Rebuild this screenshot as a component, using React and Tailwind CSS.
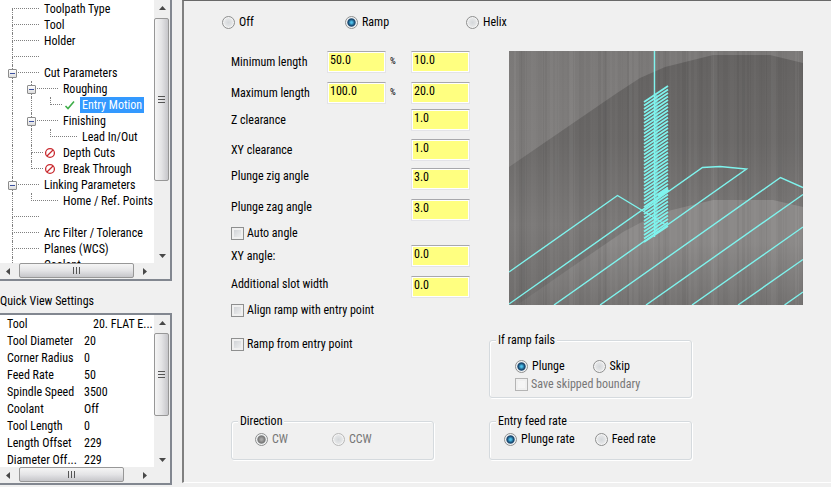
import React from 'react';

const treeRows = [
  { label: 'Toolpath Type', depth: 0, first: true },
  { label: 'Tool', depth: 0 },
  { label: 'Holder', depth: 0 },
  { label: '', depth: 0 },
  { label: 'Cut Parameters', depth: 0, open: true },
  { label: 'Roughing', depth: 1, open: true },
  { label: 'Entry Motion', depth: 2, last: true, icon: 'check', selected: true },
  { label: 'Finishing', depth: 1, open: true },
  { label: 'Lead In/Out', depth: 2, last: true },
  { label: 'Depth Cuts', depth: 1, icon: 'off' },
  { label: 'Break Through', depth: 1, last: true, icon: 'off' },
  { label: 'Linking Parameters', depth: 0, open: true },
  { label: 'Home / Ref. Points', depth: 1, last: true },
  { label: '', depth: 0 },
  { label: 'Arc Filter / Tolerance', depth: 0 },
  { label: 'Planes (WCS)', depth: 0 },
  { label: 'Coolant', depth: 0 },
];

const quickView = [
  ['Tool', '20. FLAT E...'],
  ['Tool Diameter', '20'],
  ['Corner Radius', '0'],
  ['Feed Rate', '50'],
  ['Spindle Speed', '3500'],
  ['Coolant', 'Off'],
  ['Tool Length', '0'],
  ['Length Offset', '229'],
  ['Diameter Off...', '229'],
];

const arrowPaths = {
  up: 'M0 5 L3.5 1 L7 5 Z',
  down: 'M0 2 L3.5 6 L7 2 Z',
  left: 'M5 0 L1 3.5 L5 7 Z',
  right: 'M2 0 L6 3.5 L2 7 Z',
};

function ArrowButton({ dir }) {
  return (
    <button type="button" aria-label={`Scroll ${dir}`} className="flex h-4 w-4 shrink-0 items-center justify-center">
      <svg width="7" height="7" viewBox="0 0 7 7" aria-hidden="true">
        <path d={arrowPaths[dir]} fill="#484848" />
      </svg>
    </button>
  );
}

function VerticalScrollbar({ thumbClass }) {
  return (
    <div className="flex w-4 shrink-0 flex-col bg-[#efefef]">
      <ArrowButton dir="up" />
      <div className="min-h-0 flex-1 pt-0.5">
        <div className={`flex w-[15px] flex-col items-center justify-center gap-0.5 rounded-xs border border-[#979797] bg-linear-to-r from-[#f5f5f5] via-[#e4e4e6] to-[#c6c6ca] ${thumbClass}`}>
          <span className="h-px w-[7px] bg-[#555]" />
          <span className="h-px w-[7px] bg-[#555]" />
          <span className="h-px w-[7px] bg-[#555]" />
        </div>
      </div>
      <ArrowButton dir="down" />
    </div>
  );
}

function HorizontalScrollbar({ thumbClass }) {
  return (
    <div className="flex h-4 shrink-0 bg-[#efefef] pr-[18px]">
      <ArrowButton dir="left" />
      <div className="min-w-0 flex-1 pl-[3px]">
        <div className={`flex h-[15px] items-center justify-center gap-0.5 rounded-xs border border-[#979797] bg-linear-to-b from-[#f5f5f5] via-[#e4e4e6] to-[#c6c6ca] ${thumbClass}`}>
          <span className="h-[7px] w-px bg-[#555]" />
          <span className="h-[7px] w-px bg-[#555]" />
          <span className="h-[7px] w-px bg-[#555]" />
        </div>
      </div>
      <ArrowButton dir="right" />
    </div>
  );
}

function StatusIcon({ type }) {
  if (type === 'check') {
    return (
      <svg width="12" height="12" viewBox="0 0 12 12" fill="none" aria-hidden="true" className="mr-1 ml-0.5 shrink-0">
        <path d="M1.5 7 L4 9.5 L10 2.5" stroke="#3fae49" strokeWidth="1.6" />
      </svg>
    );
  }
  return (
    <svg width="12" height="12" viewBox="0 0 12 12" fill="none" aria-hidden="true" className="mr-[7px] ml-px shrink-0">
      <circle cx="6" cy="6" r="4.4" stroke="#c8282d" strokeWidth="1.3" />
      <path d="M3 9 L9 3" stroke="#c8282d" strokeWidth="1.2" />
    </svg>
  );
}

function TreeRow({ row }) {
  return (
    <li className="flex h-4 items-center pl-3">
      {/* Guide lines of the parent levels */}
      {Array.from({ length: row.depth }, (_, i) => (
        <span key={i} className="h-full w-[19px] shrink-0 border-l border-dotted border-[#808080]" />
      ))}
      <span className={`relative flex h-full shrink-0 flex-col ${row.icon ? 'w-3' : 'w-[27px]'}`}>
        <span className={`h-1/2 w-full border-b border-dotted border-[#808080] ${row.first ? '' : 'border-l'}`} />
        <span className={`h-1/2 border-dotted border-[#808080] ${row.last ? '' : 'border-l'}`} />
        {row.open && (
          <button
            type="button"
            aria-label={`Collapse ${row.label}`}
            className="absolute top-1 -left-1 flex h-[9px] w-[9px] items-center justify-center rounded-[1px] border border-[#8c8c8c] bg-linear-to-b from-white to-[#dcdcdc]"
          >
            <span className="h-px w-[5px] bg-[#3c50a0]" />
          </button>
        )}
      </span>
      {row.icon && <StatusIcon type={row.icon} />}
      <span
        className={`leading-4 whitespace-nowrap ${row.icon ? '' : 'ml-[5px]'} ${
          row.selected ? 'bg-[#3399ff] px-0.5 text-white' : ''
        }`}
      >
        {row.label}
      </span>
    </li>
  );
}

function Radio({ label, name, ...rest }) {
  return (
    <label className="flex items-center gap-1 leading-4 whitespace-nowrap has-disabled:text-[#777]">
      <input
        type="radio"
        name={name}
        className="h-[13px] w-[13px] shrink-0 appearance-none rounded-full border border-[#8e8f8f] bg-radial from-[#d4d7da] to-[#f4f4f4] shadow-[inset_0_0_0_1px_#f4f4f4] checked:bg-radial checked:from-[#4fc3ee] checked:from-10% checked:via-[#123f66] checked:via-45% checked:to-[#e8f0f4] checked:to-65% disabled:border-[#b8b8b8] disabled:checked:border-[#8e8f8f] disabled:checked:from-[#a8a8a8] disabled:checked:via-[#777]"
        {...rest}
      />
      {label}
    </label>
  );
}

function CheckBox({ label, className, ...rest }) {
  return (
    <label className={`flex h-4 items-center gap-[3px] whitespace-nowrap has-disabled:text-[#777] ${className}`}>
      <input
        type="checkbox"
        className="h-[13px] w-[13px] shrink-0 appearance-none border border-[#8e8f8f] bg-linear-to-br from-[#c9ccd0] to-[#f6f6f6] shadow-[inset_0_0_0_2px_#f0f0f0] checked:bg-[#4b6f9c] disabled:border-[#b4b4b4] disabled:from-[#f4f4f4]"
        {...rest}
      />
      {label}
    </label>
  );
}

function NumberBox(props) {
  return (
    <input
      type="text"
      className="h-[22px] w-[59px] shrink-0 border border-[#e3e3e8] border-t-[#a8a8ac] bg-[#ffff80] px-0.5 pb-1 shadow-[inset_0_0_0_1px_#fff] outline-none"
      {...props}
    />
  );
}

function Field({ id, label, value, percent, className = '', raised }) {
  return (
    <div className={`flex h-[22px] items-center ${className}`}>
      <label htmlFor={id} className={`flex-1 leading-4 whitespace-nowrap ${raised ? 'self-start' : ''}`}>
        {label}
      </label>
      {percent && (
        <>
          <NumberBox aria-label={`${label} percent`} defaultValue={percent} />
          <span className="w-[25px] pl-1 text-[9px]">%</span>
        </>
      )}
      <NumberBox id={id} defaultValue={value} />
    </div>
  );
}

function Group({ title, className = '', children }) {
  return (
    <fieldset className={`w-[203px] rounded-[3px] border border-[#d5dade] shadow-[1px_1px_0_#fff,inset_1px_1px_0_#fff] ${className}`}>
      <legend className="ml-1.5 h-3 bg-[#f0f0f0] px-0.5 leading-3">{title}</legend>
      {children}
    </fieldset>
  );
}

// Vertical brushed streaks over the stock surface
const streaks = Array.from({ length: 74 }, (_, i) => ({
  x: i * 4 + ((i * 7) % 3),
  w: 1 + ((i * 5) % 4),
  light: (i * 11) % 5 < 2,
  o: 0.01 + ((i * 13) % 7) * 0.006,
}));

const rampPasses = Array.from({ length: 41 }, (_, i) => i * 3.5);

function RampPreview() {
  return (
    <svg viewBox="0 0 294 254" className="block w-full" role="img" aria-label="Ramp entry toolpath preview">
      <defs>
        <linearGradient id="top" x1="0" y1="0" x2="0" y2="1">
          <stop offset="0" stopColor="#7b7978" />
          <stop offset="1" stopColor="#878584" />
        </linearGradient>
        <linearGradient id="wall" x1="0" y1="0" x2="0" y2="1">
          <stop offset="0" stopColor="#656362" />
          <stop offset="0.35" stopColor="#6b6968" />
          <stop offset="0.68" stopColor="#7b7978" />
          <stop offset="1" stopColor="#6f6d6c" />
        </linearGradient>
        <linearGradient id="floor" x1="0" y1="0" x2="0" y2="1">
          <stop offset="0" stopColor="#8b8988" />
          <stop offset="0.4" stopColor="#8b8988" />
          <stop offset="1" stopColor="#757372" />
        </linearGradient>
      </defs>
      <rect width="294" height="254" fill="url(#top)" />
      <path d="M0 116 L108 42 L131 27 L156 16 L204 4 L261 4 L294 12 V254 H0 Z" fill="url(#wall)" />
      <path d="M8 254 L63 216 L114 181 L131 172 L159 160 L204 149 L264 149 L294 156 V254 Z" fill="url(#floor)" />
      {streaks.map((s) => (
        <rect key={s.x} x={s.x} width={s.w} height="254" fill={s.light ? '#fff' : '#000'} opacity={s.o} />
      ))}
      <g fill="none" stroke="#7ff4ee" strokeWidth="1.4">
        <path d="M145.5 0 V186" />
        <path d="M0 221 L108.5 144.5 L135 160.5 L157 174" />
        <path d="M0 253 L193.5 116.5 L211 115.5 L237.5 118 L45 254" />
        <path d="M91 254 L271.5 126.5 L294 136.5" />
        <path d="M137 254 L294 143.5" />
        <path d="M183 254 L294 176" />
        <path d="M229 254 L294 208.5" />
        <path d="M275.5 254 L294 241" />
        {rampPasses.map((y) => (
          <path key={y} d={`M135 ${51 + y} L159 ${35 + y}`} strokeWidth="1.8" />
        ))}
        <path d="M147 44 V183" strokeWidth="3" opacity="0.6" />
        <path d="M149 145 L159 138" strokeWidth="4" />
      </g>
    </svg>
  );
}

export default function App() {
  return (
    <div className="flex min-h-screen bg-[#f0f0f0] font-['Roboto_Condensed',Roboto,'Liberation_Sans',sans-serif] text-[12px] text-black">
      <aside className="flex w-[172px] shrink-0 flex-col">
        <nav aria-label="Toolpath pages" className="flex h-[281px] flex-col border-r-2 border-b-2 border-[#828790] bg-white">
          <div className="flex min-h-0 flex-1">
            <ul className="min-w-0 flex-1 overflow-hidden pt-px">
              {treeRows.map((row, i) => (
                <TreeRow key={i} row={row} />
              ))}
            </ul>
            <VerticalScrollbar thumbClass="h-[163px]" />
          </div>
          <HorizontalScrollbar thumbClass="w-[115px]" />
        </nav>

        <h2 className="mt-3 leading-4">Quick View Settings</h2>
        <section className="mt-1 flex h-[172px] flex-col border-t-2 border-r-2 border-b-2 border-[#828790] bg-white">
          <div className="flex min-h-0 flex-1">
            <div className="min-w-0 flex-1 overflow-hidden pl-[7px]">
              <table className="w-full table-fixed">
                <tbody>
                  {quickView.map(([name, value], i) => (
                    <tr key={name} className="h-[17px] leading-4">
                      <th scope="row" className="w-[77px] p-0 text-left font-normal whitespace-nowrap">{name}</th>
                      <td className={`p-0 whitespace-nowrap ${i === 0 ? 'pl-[9px]' : ''}`}>{value}</td>
                    </tr>
                  ))}
                </tbody>
              </table>
            </div>
            <VerticalScrollbar thumbClass="h-[83px]" />
          </div>
          <HorizontalScrollbar thumbClass="w-[105px]" />
        </section>
      </aside>

      <main className="mb-1 ml-2.5 min-w-0 flex-1 border-t border-b border-l-2 border-t-[#696969] border-b-white border-l-[#808080] pt-[13px] pl-[38px]">
        <div role="radiogroup" aria-label="Entry motion" className="grid grid-cols-[123px_121px_1fr]">
          <Radio name="entry" label="Off" />
          <Radio name="entry" label="Ramp" defaultChecked />
          <Radio name="entry" label="Helix" />
        </div>

        <div className="grid grid-cols-[258px_1fr] pt-[21px] pl-[9px]">
          <div className="flex flex-col">
            <div className="w-[239px]">
              <Field id="min-length" label="Minimum length" percent="50.0" value="10.0" />
              <Field id="max-length" label="Maximum length" percent="100.0" value="20.0" className="mt-[9px]" />
              <Field id="z-clearance" label="Z clearance" value="1.0" className="mt-[5px]" />
              <Field id="xy-clearance" label="XY clearance" value="1.0" className="mt-2" />
              <Field id="zig-angle" label="Plunge zig angle" value="3.0" className="mt-[7px]" raised />
              <Field id="zag-angle" label="Plunge zag angle" value="3.0" className="mt-[9px]" raised />
              <CheckBox label="Auto angle" className="mt-1" />
              <Field id="xy-angle" label="XY angle:" value="0.0" className="mt-1" />
              <Field id="slot-width" label="Additional slot width" value="0.0" className="mt-[9px]" raised />
              <CheckBox label="Align ramp with entry point" className="mt-1" />
              <CheckBox label="Ramp from entry point" className="mt-[18px]" />
            </div>
            <Group title="Direction" className="mt-auto h-[45px]">
              <div className="flex gap-11 pt-1 pl-[23px]">
                <Radio name="direction" label="CW" defaultChecked disabled />
                <Radio name="direction" label="CCW" disabled />
              </div>
            </Group>
          </div>

          <div>
            <div className="pr-7 pl-5">
              <RampPreview />
            </div>
            <Group title="If ramp fails" className="mt-[29px] h-[64px]">
              <div className="flex gap-7 pt-3 pl-[25px]">
                <Radio name="ramp-fails" label="Plunge" defaultChecked />
                <Radio name="ramp-fails" label="Skip" />
              </div>
              <CheckBox label="Save skipped boundary" className="mt-0.5 ml-[25px]" disabled />
            </Group>
            <Group title="Entry feed rate" className="mt-[17px] h-[45px]">
              <div className="flex gap-5 pt-1 pl-3.5">
                <Radio name="feed-rate" label="Plunge rate" defaultChecked />
                <Radio name="feed-rate" label="Feed rate" />
              </div>
            </Group>
          </div>
        </div>
      </main>
    </div>
  );
}
